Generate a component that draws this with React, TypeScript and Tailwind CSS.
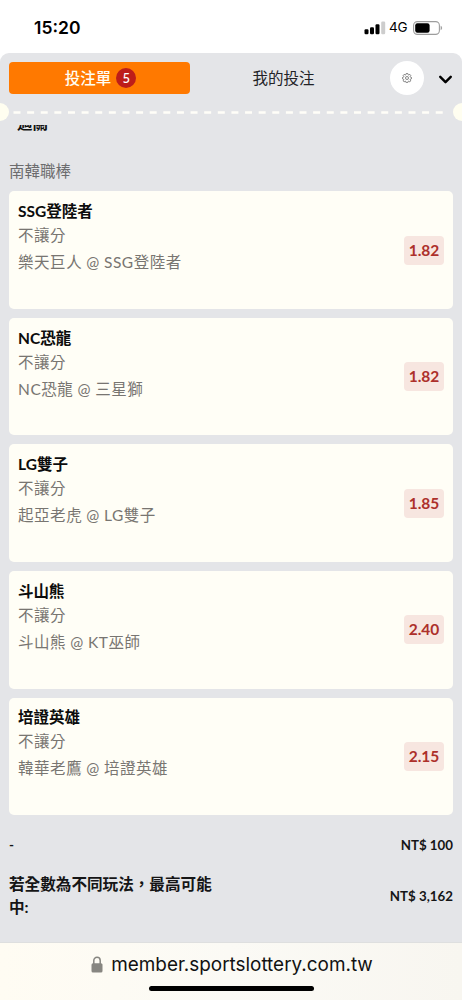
import { ChevronDown } from "lucide-react";

type Bet = {
    id: number;
    pick: string;
    market: string;
    match: string;
    odds: string;
};

const bets: Bet[] = [
    { id: 1, pick: "SSG登陸者", market: "不讓分", match: "樂天巨人 @ SSG登陸者", odds: "1.82" },
    { id: 2, pick: "NC恐龍", market: "不讓分", match: "NC恐龍 @ 三星獅", odds: "1.82" },
    { id: 3, pick: "LG雙子", market: "不讓分", match: "起亞老虎 @ LG雙子", odds: "1.85" },
    { id: 4, pick: "斗山熊", market: "不讓分", match: "斗山熊 @ KT巫師", odds: "2.40" },
    { id: 5, pick: "培證英雄", market: "不讓分", match: "韓華老鷹 @ 培證英雄", odds: "2.15" },
];

function StatusBar() {
    return (
        <div className="h-[53px] shrink-0 flex items-center justify-between pl-[34px] pr-[19px] pt-[3px] text-black font-['Inter',sans-serif]">
            <span className="text-[17.5px] font-semibold leading-none">15:20</span>
            <div className="flex items-center">
                <svg width="22" height="14" viewBox="0 0 22 14">
                    <rect x="0.5" y="8.3" width="4" height="5" rx="1.2" />
                    <rect x="6" y="6.2" width="4" height="7.1" rx="1.2" />
                    <rect x="11.5" y="3.3" width="4" height="10" rx="1.2" />
                    <rect x="17.2" y="0.5" width="4" height="12.8" rx="1.2" fill="#cdcdcd" />
                </svg>
                <span className="ml-[3px] w-[21px] text-[13.5px] leading-none tracking-[-0.3px]">4G</span>
                <svg className="ml-[3px]" width="30" height="14" viewBox="0 0 30 14">
                    <rect x="0.6" y="0.6" width="25.8" height="12.8" rx="3.8" fill="none" stroke="#9d9d9d" strokeWidth="1.1" />
                    <rect x="2.2" y="2.2" width="14.4" height="9.6" rx="2.2" />
                    <path d="M27.6 4.8c1 .4 1.5 1.2 1.5 2.2s-.5 1.8-1.5 2.2z" fill="#a2a2a2" />
                </svg>
            </div>
        </div>
    );
}

function GearIcon() {
    return (
        <svg width="10" height="10" viewBox="0 0 20 20" fill="none" stroke="#555" strokeWidth="1.4" strokeLinejoin="round">
            <path d="M8.5 1h3l.5 2.3 1.6.7 2-1.3 2 2-1.3 2 .7 1.7 2 .6v2.5l-2.1.6-.7 1.6 1.2 2-2 2.1-2-1.3-1.6.7-.5 2.3h-3L8 17.2l-1.6-.7-2 1.3-2-2.1 1.2-2-.7-1.6-2.1-.6V9l2.1-.6.7-1.7-1.3-2 2-2 2 1.3L8 3.3z" />
            <circle cx="10" cy="10" r="3" />
        </svg>
    );
}

function BetCard({ bet }: { bet: Bet }) {
    return (
        <div className="h-[117.6px] shrink-0 flex items-center justify-between rounded-[5px] bg-[#fffef6] px-[9px]">
            <div className="h-full pt-[8.7px] text-[#787571] whitespace-nowrap">
                <div className="h-[23px] leading-[23px] text-[15.5px] font-bold text-[#0c0c0c]">{bet.pick}</div>
                <div className="h-6 leading-6 text-[15.5px] tracking-[0.5px]">{bet.market}</div>
                <div className="h-[30px] leading-[30px] text-[15.5px] tracking-[0.55px] [word-spacing:-0.4px]">{bet.match}</div>
            </div>
            <div className="w-[40px] h-[29px] rounded-[4px] bg-[#f7e6e0] text-center leading-[28px] text-[15.5px] font-bold text-[#ad302b]">
                {bet.odds}
            </div>
        </div>
    );
}

export default function App() {
    return (
        <div className="w-[462px] h-[1000px] overflow-hidden flex flex-col bg-white font-['Lato','Noto_Sans_CJK_TC',sans-serif]">
            <StatusBar />

            <div className="flex-1 min-h-0 flex flex-col rounded-t-[9px] bg-[#e4e5e8] overflow-hidden">
                <div className="h-[50px] shrink-0 flex items-center pl-[9px] pr-[7px]">
                    <button className="w-[181px] h-8 shrink-0 flex items-center justify-center gap-[5px] pl-[2px] rounded-[4px] bg-[#ff7900] text-[15.5px] font-medium text-[#fffef3]">
                        <span className="pt-px">投注單</span>
                        <span className="size-5 rounded-full bg-[#bd1d19] text-center text-[13px] leading-5 text-white">5</span>
                    </button>
                    <button className="w-[187px] shrink-0 pt-px text-center text-[15.5px] text-[#222327]">我的投注</button>
                    <button className="ml-[13px] size-[34px] shrink-0 flex items-center justify-center rounded-full bg-white">
                        <GearIcon />
                    </button>
                    <ChevronDown className="ml-[11px] mt-[2px] shrink-0 text-black" size={21} strokeWidth={2.8} />
                </div>

                {/* ticket perforation */}
                <div className="h-[18px] shrink-0 flex items-center justify-between">
                    <span className="-ml-[9px] size-[18px] shrink-0 rounded-full bg-[#fffef0]" />
                    <svg width="440" height="3" viewBox="0 0 440 3">
                        <path d="M2.5 1.5H438" stroke="#fffef8" strokeWidth="2.5" strokeDasharray="7 6.62" />
                    </svg>
                    <span className="-mr-[9px] size-[18px] shrink-0 rounded-full bg-[#fffef0]" />
                </div>

                <div className="flex-1 min-h-0 mt-[4px] px-[9px] flex flex-col overflow-hidden">
                    <div className="h-[25px] shrink-0 -mt-[14px] ml-[8px] mb-[23px] text-[15.5px] leading-[25px] font-bold text-[#111] [clip-path:inset(14px_0_0_0)]">
                        過關
                    </div>
                    <div className="h-[24px] shrink-0 mb-[8.3px] text-[15.5px] leading-6 text-[#6c6c6e]">南韓職棒</div>

                    <div className="flex flex-col gap-[9px]">
                        {bets.map((bet) => (
                            <BetCard key={bet.id} bet={bet} />
                        ))}
                    </div>

                    <div className="h-[22px] mt-[20px] shrink-0 flex items-center justify-between text-[13.3px] font-bold text-[#151516]">
                        <span>-</span>
                        <span>NT$ 100</span>
                    </div>
                    <div className="mt-[16px] shrink-0 flex items-center justify-between font-bold text-[#151516]">
                        <span className="w-[215px] text-[15.6px] leading-[23px]">若全數為不同玩法，最高可能中:</span>
                        <span className="pt-[2px] text-[13.3px]">NT$ 3,162</span>
                    </div>
                </div>
            </div>

            <div className="h-[58px] shrink-0 flex flex-col items-center border-t border-[#dedfdf] bg-linear-to-r from-[#fffcf3] via-[#fbfaf5] to-[#f8f6f0]">
                <div className="h-[43px] flex items-center gap-[8px] pl-[2px] text-[#111]">
                    <svg width="12" height="17" viewBox="0 0 12 17">
                        <path d="M2.8 8V4.5a3.2 3.2 0 0 1 6.4 0V8" fill="none" stroke="#878681" strokeWidth="1.5" />
                        <rect x="0.5" y="7.2" width="11" height="9.3" rx="1.5" fill="#878681" />
                    </svg>
                    <span className="text-[18.9px] leading-6 font-['Inter',sans-serif]">member.sportslottery.com.tw</span>
                </div>
                <div className="w-[165px] h-[5px] rounded-full bg-black" />
            </div>
        </div>
    );
}
